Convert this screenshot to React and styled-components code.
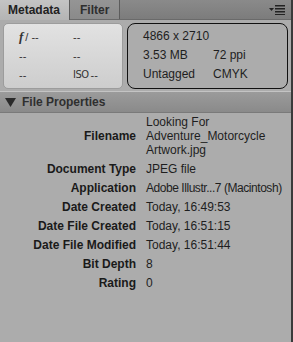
import React from 'react'
import styled, { createGlobalStyle } from 'styled-components'

const GlobalStyle = createGlobalStyle`
  html, body { margin: 0; padding: 0; background: #acacac; }
  body { font-family: "Liberation Sans", Arial, sans-serif; }
`

const Panel = styled.div`
  width: 293px;
  height: 342px;
  background: #acacac;
  box-sizing: border-box;
  border-right: 2px solid #3a3a3a;
  overflow: hidden;
  color: #1e1e1e;
  font-size: 12px;
`

const TabBar = styled.div`
  display: flex;
  align-items: stretch;
  height: 19px;
  background: linear-gradient(#8a8a8a, #7c7c7c);
  border-bottom: 1px solid #6a6a6a;
`

const Tab = styled.div`
  display: flex;
  align-items: center;
  padding: 0 ${p => (p.$active ? '9px 0 8px' : '10px')};
  font-weight: bold;
  font-size: 12px;
  color: ${p => (p.$active ? '#222' : '#2e2e2e')};
  background: ${p => (p.$active ? 'linear-gradient(#c4c4c4, #b4b4b4)' : 'linear-gradient(#959595, #8a8a8a)')};
  border-right: 1px solid #5c5c5c;
  margin-bottom: ${p => (p.$active ? '-1px' : '0')};
`

const MenuButton = styled.div`
  margin-left: auto;
  display: flex;
  align-items: center;
  padding-right: 6px;
`

const Summary = styled.div`
  display: flex;
  gap: 4px;
  padding: 3px 3px 2px 3px;
  height: 66px;
`

const Exposure = styled.div`
  width: 120px;
  flex: none;
  border-radius: 5px;
  background: linear-gradient(#e2e2e2, #cdcdcd);
  border: 1px solid #9c9c9c;
  box-sizing: border-box;
  display: grid;
  grid-template-columns: 54px 1fr;
  grid-auto-rows: 19px;
  padding: 3px 0 0 15px;
  color: #333;
  font-size: 11px;
`

const Cell = styled.div`
  display: flex;
  align-items: center;
  gap: 2px;
`

const Aperture = styled.i`
  font-family: "Liberation Serif", serif;
  font-weight: bold;
  font-size: 13px;
`

const Iso = styled.span`
  font-family: "DejaVu Sans Condensed", "Liberation Sans Narrow", sans-serif;
  font-size: 11px;
  letter-spacing: -0.5px;
`

const FileInfo = styled.div`
  flex: 1;
  border: 1px solid #111;
  border-radius: 8px;
  display: grid;
  grid-template-columns: 70px 1fr;
  grid-auto-rows: 19px;
  padding: 2px 0 0 15px;
  align-content: start;
  font-size: 12px;
  color: #1e1e1e;
`

const SectionHeader = styled.div`
  display: flex;
  align-items: center;
  gap: 6px;
  height: 20px;
  padding-left: 5px;
  background: linear-gradient(#9b9b9b, #8a8a8a);
  border-top: 1px solid #c4c4c4;
  border-bottom: 1px solid #7a7a7a;
  font-weight: bold;
  font-size: 12px;
  color: #2f2f2f;
`

const Rows = styled.div`
  display: grid;
  grid-template-columns: 136px 1fr;
  column-gap: 10px;
  row-gap: 5px;
  padding-top: 2px;
`

const Label = styled.div`
  text-align: right;
  font-weight: bold;
  align-self: ${p => (p.$center ? 'center' : 'start')};
  line-height: 14px;
  color: #1a1a1a;
  white-space: nowrap;
`

const Value = styled.div`
  line-height: 14px;
  color: #1e1e1e;
  white-space: pre;
  letter-spacing: ${p => (p.$tight ? '-0.45px' : '0')};
`

const rows = [
  ['Filename', 'Looking For\nAdventure_Motorcycle\nArtwork.jpg'],
  ['Document Type', 'JPEG file'],
  ['Application', 'Adobe Illustr...7 (Macintosh)', true],
  ['Date Created', 'Today, 16:49:53'],
  ['Date File Created', 'Today, 16:51:15'],
  ['Date File Modified', 'Today, 16:51:44'],
  ['Bit Depth', '8'],
  ['Rating', '0'],
]

export default function App() {
  return (
    <>
      <GlobalStyle />
      <Panel>
        <TabBar>
          <Tab $active>Metadata</Tab>
          <Tab>Filter</Tab>
          <MenuButton>
            <svg width="16" height="10" viewBox="0 0 16 10">
              <path d="M0 3 L5 3 L2.5 6 Z" fill="#222" />
              <rect x="6" y="0" width="10" height="1.5" fill="#222" />
              <rect x="6" y="3" width="10" height="1.5" fill="#222" />
              <rect x="6" y="6" width="10" height="1.5" fill="#222" />
              <rect x="6" y="9" width="10" height="1" fill="#222" />
            </svg>
          </MenuButton>
        </TabBar>
        <Summary>
          <Exposure>
            <Cell><Aperture>f</Aperture> / --</Cell>
            <Cell>--</Cell>
            <Cell>--</Cell>
            <Cell>--</Cell>
            <Cell>--</Cell>
            <Cell><Iso>ISO</Iso> --</Cell>
          </Exposure>
          <FileInfo>
            <Cell>4866 x 2710</Cell>
            <Cell></Cell>
            <Cell>3.53 MB</Cell>
            <Cell>72 ppi</Cell>
            <Cell>Untagged</Cell>
            <Cell>CMYK</Cell>
          </FileInfo>
        </Summary>
        <SectionHeader>
          <svg width="11" height="9" viewBox="0 0 11 9">
            <path d="M0 0 L11 0 L5.5 9 Z" fill="#2a2a2a" />
          </svg>
          File Properties
        </SectionHeader>
        <Rows>
          {rows.map(([l, v, tight]) => (
            <React.Fragment key={l}>
              <Label $center={l === 'Filename'}>{l}</Label>
              <Value $tight={tight}>{v}</Value>
            </React.Fragment>
          ))}
        </Rows>
      </Panel>
    </>
  )
}
